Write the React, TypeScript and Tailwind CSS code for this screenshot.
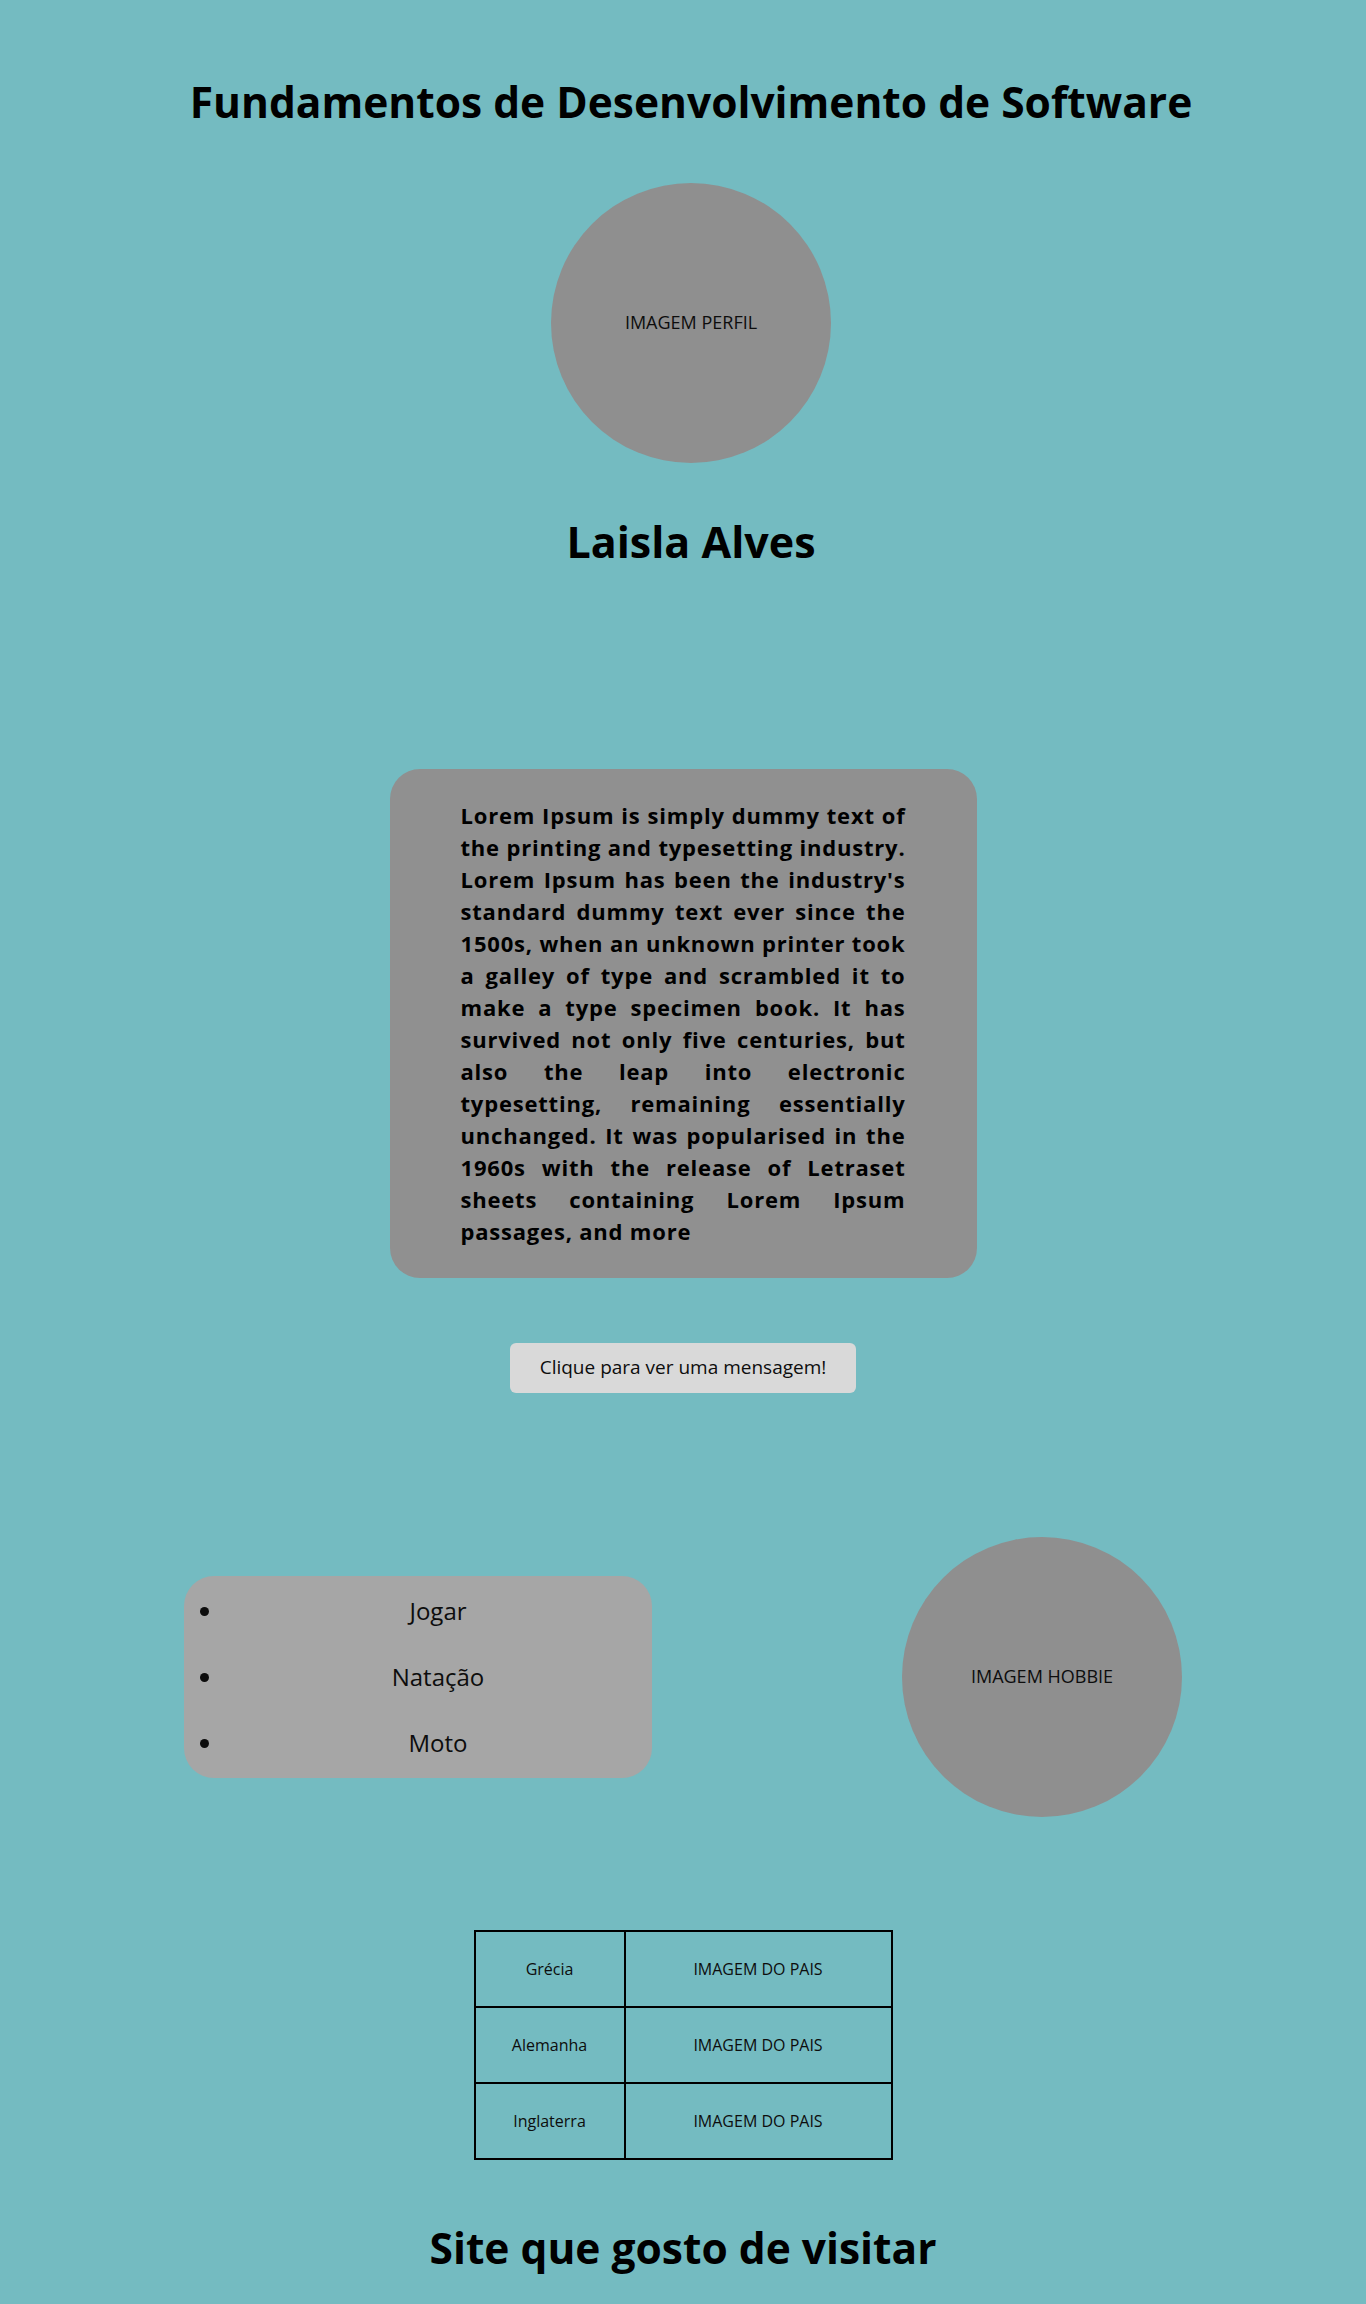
import React from 'react';

const loremText =
  "Lorem Ipsum is simply dummy text of the printing and typesetting industry. Lorem Ipsum has been the industry's standard dummy text ever since the 1500s, when an unknown printer took a galley of type and scrambled it to make a type specimen book. It has survived not only five centuries, but also the leap into electronic typesetting, remaining essentially unchanged. It was popularised in the 1960s with the release of Letraset sheets containing Lorem Ipsum passages, and more";

const hobbies = ['Jogar', 'Natação', 'Moto'];
const countries = ['Grécia', 'Alemanha', 'Inglaterra'];

const App: React.FC = () => {
  return (
    <div className="min-h-[2304px] w-full bg-[#74bbc1] text-[#0d0d0d] font-['Open_Sans',sans-serif]">
      {/* HEADER + PERFIL */}
      <section className="flex flex-col items-center pl-[16px]">
        <h1 className="pt-[81px] text-[42.5px] font-bold leading-none text-center text-black">
          Fundamentos de Desenvolvimento de Software
        </h1>
        <div className="mt-[59px] w-[280px] h-[280px] rounded-full bg-[#8f8f8f] flex items-center justify-center text-[18px]">
          IMAGEM PERFIL
        </div>
        <h2 className="mt-[57px] text-[43px] font-bold leading-none text-black">Laisla Alves</h2>
      </section>

      {/* SOBRE */}
      <section className="flex flex-col items-center">
        <div className="mt-[206px] w-[587px] rounded-[30px] bg-[#909090] px-[71px] pt-[30px] pb-[31px]">
          <p className="text-[22px] font-bold leading-[32px] tracking-[0.8px] text-justify text-black">{loremText}</p>
        </div>
        <button className="mt-[65px] w-[346px] h-[50px] rounded-[6px] bg-[#d9d9d9] text-[19px]">
          Clique para ver uma mensagem!
        </button>
      </section>

      {/* HOBBIES */}
      <section className="mt-[144px] flex items-center">
        <ul className="ml-[184px] w-[468px] rounded-[30px] bg-[#a6a6a6] list-disc pl-[40px] py-[17px] space-y-[30px]">
          {hobbies.map((h) => (
            <li key={h} className="text-[24px] leading-[36px] text-center">
              {h}
            </li>
          ))}
        </ul>
        <div className="ml-[250px] w-[280px] h-[280px] rounded-full bg-[#8f8f8f] flex items-center justify-center text-[18px]">
          IMAGEM HOBBIE
        </div>
      </section>

      {/* PAISES */}
      <section className="flex flex-col items-center">
        <table className="mt-[113px] border-collapse text-[16px]">
          <tbody>
            {countries.map((c) => (
              <tr key={c} className="h-[76px]">
                <td className="w-[150px] border-2 border-black text-center">{c}</td>
                <td className="w-[267px] border-2 border-black text-center">IMAGEM DO PAIS</td>
              </tr>
            ))}
          </tbody>
        </table>
        <h2 className="mt-[67px] text-[42.5px] font-bold leading-none text-black">Site que gosto de visitar</h2>
      </section>
    </div>
  );
};

export default App;
